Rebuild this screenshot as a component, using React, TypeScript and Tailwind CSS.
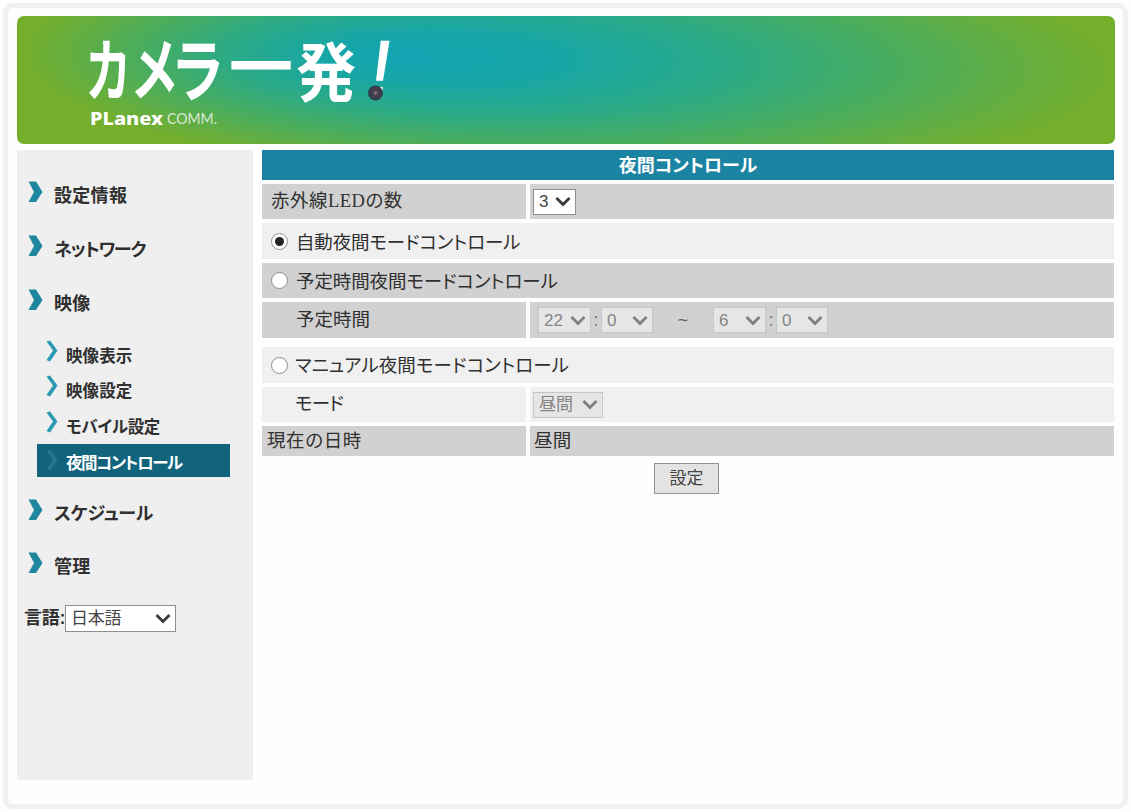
import type { ReactNode } from 'react';
import clsx from 'clsx';

const mainMenu = [
  { label: '設定情報', text: 'tracking-[0.3px]' },
  { label: 'ネットワーク', text: 'tracking-[-1.2px]' },
  { label: '映像', text: 'tracking-[0.3px]' },
];

const subMenu = [
  { label: '映像表示', text: 'tracking-[0.1px]' },
  { label: '映像設定', text: 'tracking-[0.1px]' },
  { label: 'モバイル設定', text: 'tracking-[-0.3px]' },
];

function BigChevron() {
  return (
    <svg width="15" height="22" viewBox="0 0 15 22" className="shrink-0">
      <path d="M0.5 0.5H8L14.5 11L8 21H0.5L6 11Z" fill="#1f86a0" />
    </svg>
  );
}

function SmallChevron({ color }: { color: string }) {
  return (
    <svg width="12" height="22" viewBox="0 0 12 22" className="shrink-0">
      <path d="M0.5 1.5L4 0.5L11.5 10.5L4 21.5L0.5 20L7 10.5Z" fill={color} />
    </svg>
  );
}

function Select({ value, className, disabled }: { value: string; className: string; disabled?: boolean }) {
  return (
    <span
      className={clsx(
        'flex items-center justify-between border pl-[5px] pr-[4px] text-[17px] leading-none',
        disabled ? 'border-[#c6c6c6] bg-[#e6e6e6] text-[#858585]' : 'border-[#8f8f8f] bg-white text-[#444]',
        className
      )}
    >
      {value}
      <svg width="16" height="11" viewBox="0 0 16 11" className="shrink-0">
        <path d="M1.5 2L8 8.5L14.5 2" fill="none" stroke={disabled ? '#808080' : '#3a3a3a'} strokeWidth="2.8" />
      </svg>
    </span>
  );
}

function Radio({ checked }: { checked?: boolean }) {
  return (
    <span className="flex size-[17px] shrink-0 items-center justify-center rounded-full border border-[#8c8c8c] bg-white">
      {checked && <span className="size-[9px] rounded-full bg-[#222]" />}
    </span>
  );
}

function Row({ label, children, className }: { label: ReactNode; children?: ReactNode; className: string }) {
  return (
    <div className="flex gap-1">
      <div className={clsx('flex w-[264px] items-center', className)}>{label}</div>
      <div className={clsx('flex flex-1 items-center', className)}>{children}</div>
    </div>
  );
}

function Banner() {
  return (
    <header className="h-[128px] w-[1098px] overflow-hidden rounded-[7px]">
      <svg width="1098" height="128" viewBox="17 16 1098 128">
        <defs>
          <radialGradient
            id="glow"
            gradientUnits="userSpaceOnUse"
            cx="0"
            cy="0"
            r="1"
            fx="-0.3"
            fy="-0.02"
            gradientTransform="translate(570 62) rotate(1) scale(550 122)"
          >
            <stop offset="0" stopColor="#12a5b3" />
            <stop offset="0.2" stopColor="#17a6a8" />
            <stop offset="0.45" stopColor="#2aaa87" />
            <stop offset="0.7" stopColor="#4bad5c" />
            <stop offset="0.88" stopColor="#66ae3e" />
            <stop offset="1" stopColor="#75ae2b" />
          </radialGradient>
          <radialGradient id="lens">
            <stop offset="0" stopColor="#96858f" />
            <stop offset="0.35" stopColor="#4a3e4c" />
            <stop offset="1" stopColor="#2d3f4b" />
          </radialGradient>
        </defs>
        <rect x="17" y="16" width="1098" height="128" fill="url(#glow)" />
        <g fill="#fff" fontFamily="'Noto Sans CJK JP', sans-serif" fontWeight="700" fontSize="64">
          <text transform="translate(87 96) scale(0.72 1.07)">カ</text>
          <text transform="translate(133 95) scale(0.76 1.07)">メ</text>
          <text transform="translate(174 96) scale(0.84 1.07)">ラ</text>
          <text transform="translate(229 90)">一</text>
          <text transform="translate(296 96) scale(0.94 1)">発</text>
          <text transform="translate(367 98) skewX(-8) scale(0.95 1.3)" fontFamily="'Liberation Sans', sans-serif">!</text>
        </g>
        <circle cx="375.5" cy="93" r="7.5" fill="url(#lens)" />
        <g fill="#fff">
          <text x="90" y="125" fontFamily="'Noto Sans', sans-serif" fontSize="17" fontWeight="800" textLength="73" lengthAdjust="spacingAndGlyphs">
            PLanex
          </text>
          <text x="167" y="124" fontFamily="Lato, sans-serif" fontSize="16" fontWeight="400" textLength="50" opacity="0.75" lengthAdjust="spacingAndGlyphs">
            COMM.
          </text>
        </g>
      </svg>
    </header>
  );
}

export default function App() {
  return (
    <div className="h-[812px] w-[1131px] bg-[#fefefe] p-[3px] font-['Liberation_Sans','Noto_Sans_CJK_JP',sans-serif] text-[18.5px] leading-none text-[#303030] [font-feature-settings:'palt']">
      <div className="h-full rounded-[10px] border-[5px] border-[#f2f0f1] bg-[#fefefe] pt-2 pl-[9px]">
        <Banner />

        <div className="mt-[6px] flex items-start gap-[9px]">
          <nav className="h-[630px] w-[236px] bg-[#efefef] pt-[15px] font-bold">
            {mainMenu.map((item) => (
              <div key={item.label} className="flex h-[54px] items-center gap-[11px] pl-[11px]">
                <BigChevron />
                <span className={clsx('mt-[8px] text-[18px]', item.text)}>{item.label}</span>
              </div>
            ))}

            <div className="mt-[6px] text-[16.5px]">
              {subMenu.map((item) => (
                <div key={item.label} className="flex h-[35.5px] items-center gap-[8px] pl-[29px]">
                  <SmallChevron color="#2a9ab4" />
                  <span className={clsx('mt-[10px]', item.text)}>{item.label}</span>
                </div>
              ))}
              <div className="mt-[4px] ml-[20px] flex h-[33px] w-[193px] items-center gap-[8px] bg-[#12637c] pl-[9px] text-white">
                <SmallChevron color="#27748c" />
                <span className="mt-[7px] tracking-[-1.4px]">夜間コントロール</span>
              </div>
            </div>

            <div className="mt-[6px] flex h-[54px] items-center gap-[11px] pl-[11px]">
              <BigChevron />
              <span className="mt-[8px] text-[18px] tracking-[-0.3px]">スケジュール</span>
            </div>
            <div className="flex h-[53px] items-center gap-[11px] pl-[11px]">
              <BigChevron />
              <span className="mt-[8px] text-[18px] tracking-[0.3px]">管理</span>
            </div>

            <div className="mt-[15px] flex items-center pl-[7px] text-[18px] tracking-[-0.3px]">
              言語:
              <Select value="日本語" className="h-[27px] w-[111px] font-normal" />
            </div>
          </nav>

          <main className="w-[852px]">
            <h1 className="flex h-[30px] items-center justify-center bg-[#1c84a3] pt-[2px] text-[18px] font-bold text-white">
              夜間コントロール
            </h1>

            <div className="mt-1 flex flex-col gap-[4px]">
              <Row
                className="h-[35px] bg-[#d1d1d1]"
                label={
                  <span className="pl-[9px] tracking-[0.5px]">
                    赤外線<span className="font-['Liberation_Serif',serif]">LED</span>の数
                  </span>
                }
              >
                <Select value="3" className="ml-[3px] h-[26px] w-[43px]" />
              </Row>

              <div className="flex h-[36px] items-center gap-[8px] bg-[#f0f0f0] pl-[9px]">
                <Radio checked />
                <span className="mt-[4px] tracking-[-0.15px]">自動夜間モードコントロール</span>
              </div>

              <div className="flex h-[35px] items-center gap-[8px] bg-[#d1d1d1] pl-[9px]">
                <Radio />
                <span className="mt-[3px] tracking-[-0.1px]">予定時間夜間モードコントロール</span>
              </div>

              <Row className="h-[36px] bg-[#d1d1d1]" label={<span className="pl-[34px]">予定時間</span>}>
                <Select disabled value="22" className="ml-[8px] h-[26px] w-[53px]" />
                <span className="w-[10px] text-center text-[#777]">:</span>
                <Select disabled value="0" className="h-[26px] w-[52px]" />
                <span className="w-[60px] text-center text-[#666]">~</span>
                <Select disabled value="6" className="h-[26px] w-[53px]" />
                <span className="w-[10px] text-center text-[#777]">:</span>
                <Select disabled value="0" className="h-[26px] w-[52px]" />
              </Row>

              <div className="mt-[5px] flex h-[36px] items-center gap-[7px] bg-[#f0f0f0] pl-[9px]">
                <Radio />
                <span className="mt-[3px] tracking-[0.1px]">マニュアル夜間モードコントロール</span>
              </div>

              <Row className="h-[35px] bg-[#f0f0f0]" label={<span className="pl-[33px] tracking-[-0.8px]">モード</span>}>
                <Select disabled value="昼間" className="ml-[3px] h-[26px] w-[70px]" />
              </Row>

              <Row className="h-[30px] bg-[#d1d1d1]" label={<span className="pl-[5px] tracking-[0.6px]">現在の日時</span>}>
                <span className="pl-[4px] tracking-[0.3px]">昼間</span>
              </Row>
            </div>

            <div className="mt-[7px] flex justify-center pr-[3px]">
              <button className="h-[31px] w-[65px] border border-[#949494] bg-[#e3e3e3] text-[17px] text-[#444]">設定</button>
            </div>
          </main>
        </div>
      </div>
    </div>
  );
}
